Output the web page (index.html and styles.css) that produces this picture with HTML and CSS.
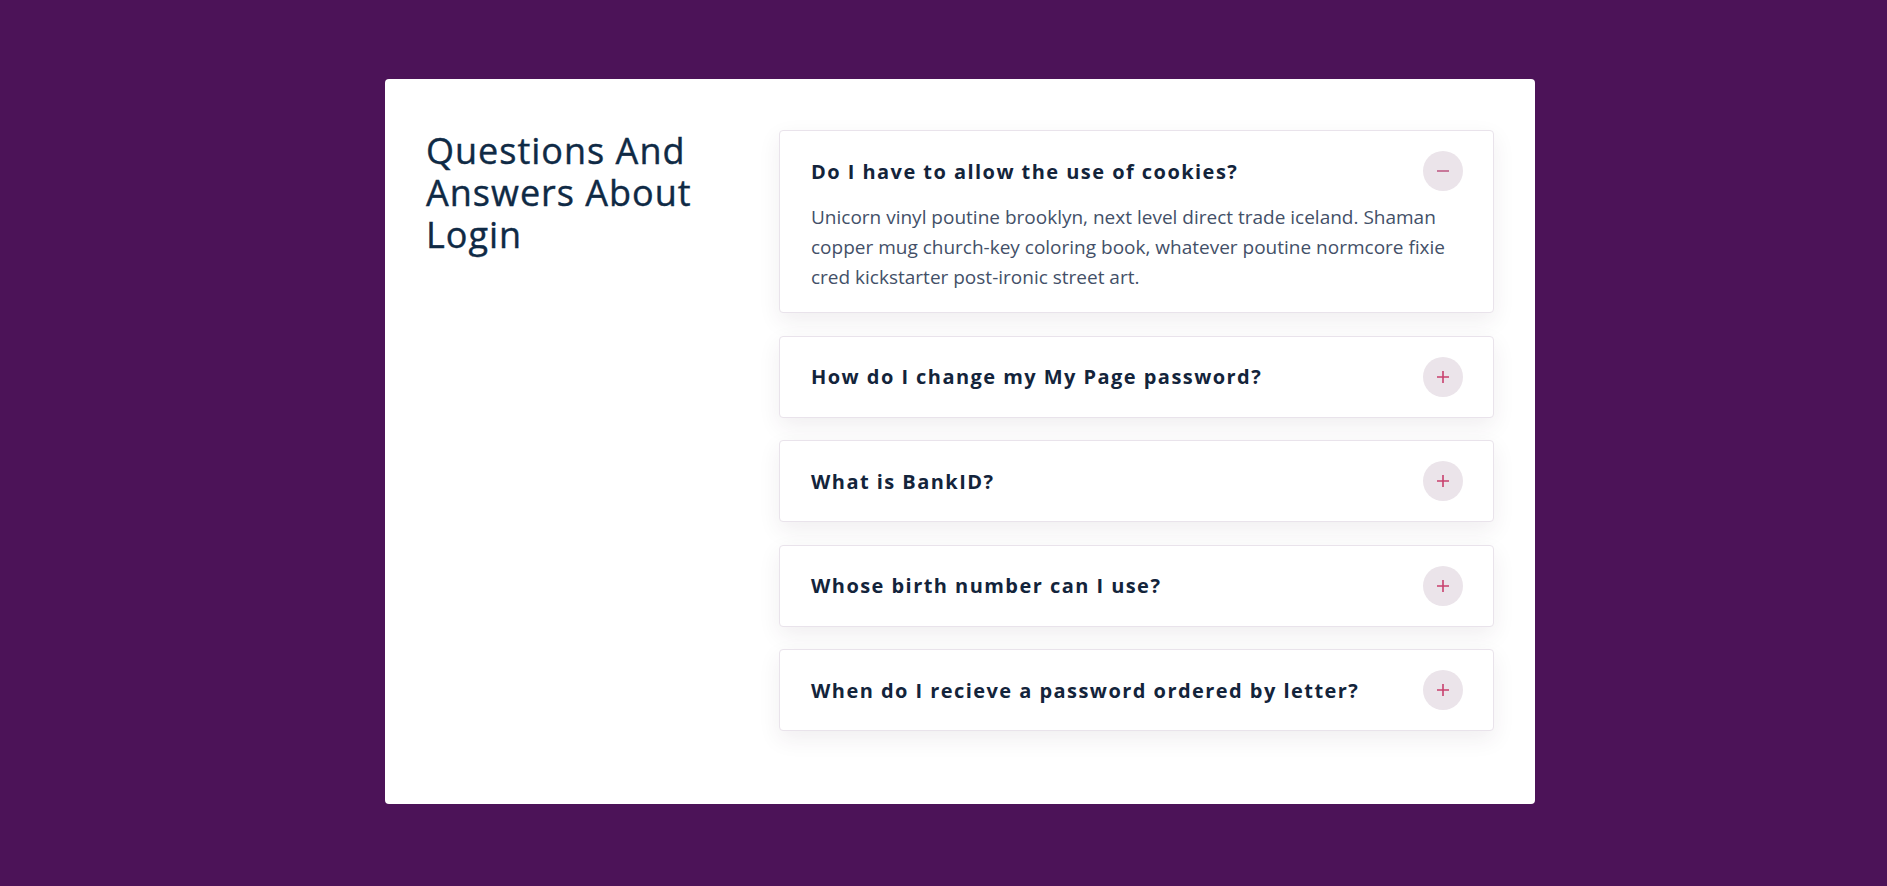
FILE: index.html
```html
<!DOCTYPE html>
<html lang="en">
<head>
<meta charset="utf-8">
<title>FAQ</title>
<link rel="stylesheet" href="styles.css">
</head>
<body>
<main class="card">
  <h1 class="title">Questions And Answers About Login</h1>
  <section class="faq">
    <div class="item open">
      <div class="head">
        <h2 class="q">Do I have to allow the use of cookies?</h2>
        <button class="toggle" aria-label="collapse"><svg width="14" height="14" viewBox="0 0 14 14"><path d="M1 7h12" stroke="#c8789a" stroke-width="2"/></svg></button>
      </div>
      <p class="a">Unicorn vinyl poutine brooklyn, next level direct trade iceland. Shaman copper mug church-key coloring book, whatever poutine normcore fixie cred kickstarter post-ironic street art.</p>
    </div>
    <div class="item">
      <div class="head">
        <h2 class="q">How do I change my My Page password?</h2>
        <button class="toggle" aria-label="expand"><svg width="14" height="14" viewBox="0 0 14 14"><path d="M1 7h12M7 1v12" stroke="#c9406e" stroke-width="1.6"/></svg></button>
      </div>
    </div>
    <div class="item">
      <div class="head">
        <h2 class="q">What is BankID?</h2>
        <button class="toggle" aria-label="expand"><svg width="14" height="14" viewBox="0 0 14 14"><path d="M1 7h12M7 1v12" stroke="#c9406e" stroke-width="1.6"/></svg></button>
      </div>
    </div>
    <div class="item">
      <div class="head">
        <h2 class="q">Whose birth number can I use?</h2>
        <button class="toggle" aria-label="expand"><svg width="14" height="14" viewBox="0 0 14 14"><path d="M1 7h12M7 1v12" stroke="#c9406e" stroke-width="1.6"/></svg></button>
      </div>
    </div>
    <div class="item">
      <div class="head">
        <h2 class="q">When do I recieve a password ordered by letter?</h2>
        <button class="toggle" aria-label="expand"><svg width="14" height="14" viewBox="0 0 14 14"><path d="M1 7h12M7 1v12" stroke="#c9406e" stroke-width="1.6"/></svg></button>
      </div>
    </div>
  </section>
</main>
</body>
</html>
```
FILE: styles.css
```css
* { box-sizing: border-box; }
html, body { margin: 0; padding: 0; }
body {
  background: #4c1358;
  font-family: "Open Sans", "Noto Sans", sans-serif;
  display: flex;
  justify-content: center;
  padding-left: 33px;
  min-height: 886px;
}
.card {
  margin-top: 79px;
  width: 1150px;
  height: 725px;
  background: #fff;
  border-radius: 4px;
  padding: 40px 41px;
  display: flex;
}
.title {
  width: 353px;
  flex: none;
  margin: 11px 0 0;
  font-size: 36px;
  line-height: 42px;
  font-weight: 500;
  letter-spacing: 1px;
  -webkit-text-stroke: 0.4px #0f2a45;
  color: #0f2a45;
  padding-right: 60px;
}
.faq {
  flex: 1;
  padding-top: 11px;
  display: flex;
  flex-direction: column;
  gap: 22.5px;
}
.item {
  background: #fff;
  border: 1px solid #e9e3eb;
  border-radius: 4px;
  padding: 20px 30px 20px 31px;
  box-shadow: 0 8px 22px rgba(60, 40, 70, 0.08);
}
.head {
  display: flex;
  align-items: center;
  justify-content: space-between;
}
.q {
  margin: 0;
  font-size: 20px;
  font-weight: 700;
  letter-spacing: 1.45px;
  color: #13243b;
}
.toggle {
  width: 40px;
  height: 40px;
  border-radius: 50%;
  border: none;
  background: #ebe4ea;
  display: flex;
  align-items: center;
  justify-content: center;
  padding: 0;
  flex: none;
}
.toggle svg { display: block; }
.a {
  margin: 11px 0 0;
  font-size: 19px;
  line-height: 30px;
  color: #435068;
}
```
